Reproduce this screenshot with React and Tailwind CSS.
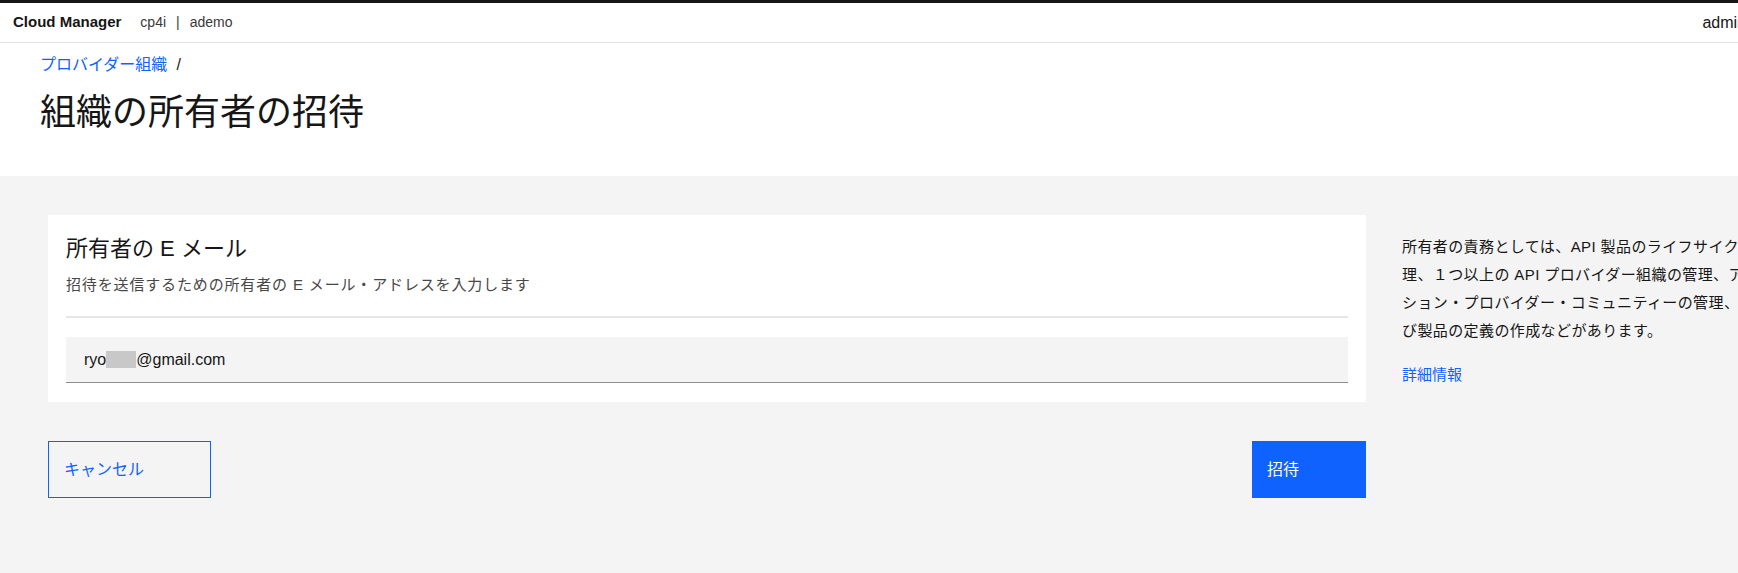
import React from 'react';

const jp = { fontFamily: '"Liberation Sans", "Noto Sans CJK JP", sans-serif' };

function Header() {
    return (
        <header className="h-[43px] bg-white border-t-[3px] border-t-[#161616] border-b border-b-[#e0e0e0] flex items-center pl-[13px] pr-4">
            <span className="text-[15px] font-bold text-[#161616]">Cloud Manager</span>
            <span className="ml-[19px] text-[14px] text-[#393939]">cp4i</span>
            <span className="mx-[10px] text-[14px] text-[#393939]">|</span>
            <span className="text-[14px] text-[#393939]">ademo</span>
            <span className="ml-auto text-[16px] text-[#161616]">admin</span>
        </header>
    );
}

function EmailCard() {
    return (
        <div className="bg-white px-[18px] pt-[20px] pb-[19px]">
            <h2 className="text-[22px] leading-[28px] text-[#161616]">所有者の E メール</h2>
            <p className="mt-[11px] text-[15px] tracking-[0.85px] leading-[22px] text-[#474747]">
                招待を送信するための所有者の E メール・アドレスを入力します
            </p>
            <div className="mt-[20px] h-[2px] bg-[#e6e6e6]"></div>
            <div className="mt-[19px] h-[46px] bg-[#f4f4f4] border-b border-b-[#8d8d8d] flex items-center pl-[18px] text-[16px] text-[#161616]">
                <span>ryo</span>
                <span className="inline-block w-[30px] h-[17px] bg-[#c8c8c8]"></span>
                <span>@gmail.com</span>
            </div>
        </div>
    );
}

function SidePanel() {
    const lines = [
        '所有者の責務としては、API 製品のライフサイクル管',
        '理、１つ以上の API プロバイダー組織の管理、アプリケー',
        'ション・プロバイダー・コミュニティーの管理、およ',
        'び製品の定義の作成などがあります。',
    ];
    return (
        <div className="w-[420px] shrink-0 pt-[18px] overflow-hidden">
            <div className="text-[15px] leading-[28px] tracking-[0.4px] text-[#161616]">
                {lines.map((l) => (
                    <div key={l} className="whitespace-nowrap">{l}</div>
                ))}
            </div>
            <a className="block mt-[16px] text-[15px] leading-[28px] text-[#0f62fe]">詳細情報</a>
        </div>
    );
}

export default function App() {
    return (
        <div className="w-screen h-[573px] overflow-hidden bg-[#f4f4f4]" style={jp}>
            <div className="w-[1762px]">
                <Header />
                <div className="bg-white pl-[40px] pt-[11px] pb-[41px]">
                    <div className="text-[16px] leading-[22px]">
                        <a className="text-[#0f62fe]">プロバイダー組織</a>
                        <span className="ml-[9px] text-[#161616]">/</span>
                    </div>
                    <h1 className="mt-[15px] text-[36px] leading-[44px] text-[#161616]">組織の所有者の招待</h1>
                </div>
                <div className="flex pl-[48px] pt-[39px] gap-[36px]">
                    <div className="w-[1318px] shrink-0">
                        <EmailCard />
                        <div className="mt-[39px] flex justify-between">
                            <button className="w-[163px] h-[57px] border border-[#0f62fe] text-left px-[15px] text-[16px] text-[#0f62fe]">
                                キャンセル
                            </button>
                            <button className="w-[114px] h-[57px] bg-[#0f62fe] text-left px-[15px] text-[16px] text-white">
                                招待
                            </button>
                        </div>
                    </div>
                    <SidePanel />
                </div>
            </div>
        </div>
    );
}
